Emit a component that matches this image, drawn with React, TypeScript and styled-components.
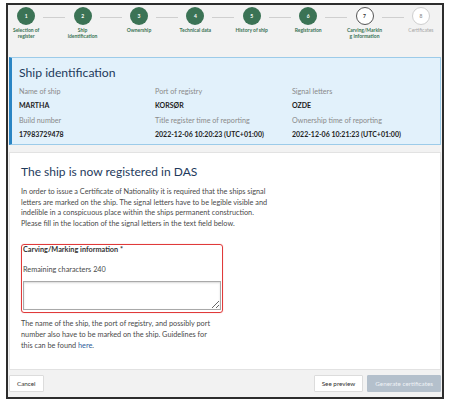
import React, { FC } from 'react'
import styled, { createGlobalStyle } from 'styled-components'

const green = '#3b7355'
const navy = '#1e3a5c'
const textGray = '#4a4a4a'

const GlobalStyle = createGlobalStyle`
  html, body {
    margin: 0;
    padding: 0;
    background: #ffffff;
  }
  body {
    font-family: Lato, "Open Sans", "Liberation Sans", sans-serif;
    color: ${textGray};
  }
`

const Frame = styled.div`
  margin: 3px 7px 0 6px;
  width: 434px;
  height: 392px;
  border: 2px solid #2d2d2d;
  background: #f2f2f2;
  display: flex;
  flex-direction: column;
  overflow: hidden;
`

const Stepper = styled.div`
  display: flex;
  height: 50px;
  margin-left: -10px;
  padding-top: 2px;
`

const Step = styled.div`
  flex: 0 0 56.4px;
  display: flex;
  flex-direction: column;
  align-items: center;
  position: relative;
`

const Connector = styled.div`
  position: absolute;
  top: 10px;
  left: calc(50% + 17px);
  width: 22px;
  height: 1px;
  background: #cfcfcf;
`

type CircleState = 'done' | 'current' | 'todo'

const Circle = styled.div<{ $state: CircleState }>`
  width: 18px;
  height: 18px;
  border-radius: 50%;
  box-sizing: border-box;
  display: flex;
  align-items: center;
  justify-content: center;
  font-size: 5px;
  font-weight: 700;
  background: ${(p) => (p.$state === 'done' ? green : '#ffffff')};
  color: ${(p) => (p.$state === 'done' ? '#ffffff' : p.$state === 'current' ? '#333' : '#999')};
  border: ${(p) =>
    p.$state === 'done' ? 'none' : p.$state === 'current' ? '1px solid #555' : '1px solid #cfcfcf'};
`

const StepLabel = styled.div<{ $todo?: boolean }>`
  margin-top: 3px;
  font-size: 5px;
  line-height: 5.5px;
  text-align: center;
  width: 36px;
  color: ${(p) => (p.$todo ? '#a5a5a5' : green)};
  font-weight: ${(p) => (p.$todo ? 400 : 700)};
`

const InfoPanel = styled.section`
  margin: 0 1px;
  height: 88px;
  box-sizing: border-box;
  background: #e2f1fb;
  border: 1px solid #9ccbe9;
  border-left: 3px solid #2a85c4;
  padding: 8px 8px 0 7px;
`

const PanelTitle = styled.h2`
  margin: 0 0 8px;
  font-size: 12.2px;
  line-height: 14px;
  font-weight: 400;
  color: ${navy};
`

const InfoGrid = styled.div`
  display: grid;
  grid-template-columns: 136px 137px 1fr;
  row-gap: 8px;
`

const Field = styled.div`
  display: flex;
  flex-direction: column;
  gap: 5px;
`

const FieldLabel = styled.span`
  font-size: 7.2px;
  line-height: 8px;
  color: #8a8a8a;
`

const FieldValue = styled.span`
  font-size: 7px;
  line-height: 8px;
  font-weight: 700;
  color: #222;
`

const MainPanel = styled.section`
  margin: 7px 1px 0;
  height: 218px;
  box-sizing: border-box;
  background: #ffffff;
  border: 1px solid #e2e2e2;
  padding: 12px 12px 0 11px;
`

const MainTitle = styled.h1`
  margin: 0 0 8px;
  font-size: 12px;
  line-height: 14px;
  font-weight: 400;
  color: ${navy};
`

const Paragraph = styled.p`
  margin: 0;
  width: 252px;
  font-size: 7.3px;
  line-height: 10.6px;
  color: ${textGray};
`

const Highlight = styled.div`
  margin-top: 15px;
  width: 202px;
  box-sizing: border-box;
  border: 1px solid #e03a3a;
  border-radius: 3px;
  box-shadow: 0 0 1px rgba(224, 58, 58, 0.5);
  padding: 1px 1px 2px 1px;
`

const InputLabel = styled.div`
  font-size: 7.3px;
  line-height: 8px;
  font-weight: 700;
  color: #333;
`

const Remaining = styled.div`
  margin-top: 12px;
  font-size: 7.3px;
  line-height: 8px;
  color: ${textGray};
`

const TextArea = styled.textarea`
  display: block;
  margin-top: 7px;
  width: 100%;
  height: 29px;
  box-sizing: border-box;
  border: 1px solid #a9a9a9;
  box-shadow: inset 0 1px 2px rgba(0, 0, 0, 0.15);
  resize: vertical;
  font-family: inherit;
  font-size: 7px;
`

const Hint = styled.p`
  margin: 6px 0 0;
  width: 196px;
  font-size: 7.3px;
  line-height: 10.8px;
  color: ${textGray};
`

const Link = styled.a`
  color: #2a5d9a;
  text-decoration: none;
`

const Footer = styled.footer`
  flex: 1;
  display: flex;
  align-items: center;
  gap: 4px;
  padding: 0 1px;
`

const Button = styled.button<{ $primary?: boolean }>`
  height: 17px;
  padding: 0 7px;
  font-family: inherit;
  font-size: 6.3px;
  border-radius: 1px;
  border: 1px solid ${(p) => (p.$primary ? '#b4c0cc' : '#dcdcdc')};
  background: ${(p) => (p.$primary ? '#b4c0cc' : '#ffffff')};
  color: ${(p) => (p.$primary ? '#eef2f6' : '#333')};
  cursor: pointer;
`

const Spacer = styled.div`
  flex: 1;
`

const steps: { label: string; state: CircleState }[] = [
  { label: 'Selection of register', state: 'done' },
  { label: 'Ship identification', state: 'done' },
  { label: 'Ownership', state: 'done' },
  { label: 'Technical data', state: 'done' },
  { label: 'History of ship', state: 'done' },
  { label: 'Registration', state: 'done' },
  { label: 'Carving/Markin g information', state: 'current' },
  { label: 'Certificates', state: 'todo' },
]

const info = [
  ['Name of ship', 'MARTHA'],
  ['Port of registry', 'KORSØR'],
  ['Signal letters', 'OZDE'],
  ['Build number', '17983729478'],
  ['Title register time of reporting', '2022-12-06 10:20:23 (UTC+01:00)'],
  ['Ownership time of reporting', '2022-12-06 10:21:23 (UTC+01:00)'],
]

const App: FC = () => {
  return (
    <>
      <GlobalStyle />
      <Frame>
        <Stepper>
          {steps.map((s, i) => (
            <Step key={s.label}>
              <Circle $state={s.state}>{i + 1}</Circle>
              <StepLabel $todo={s.state === 'todo'}>{s.label}</StepLabel>
              {i < steps.length - 1 && <Connector />}
            </Step>
          ))}
        </Stepper>

        <InfoPanel>
          <PanelTitle>Ship identification</PanelTitle>
          <InfoGrid>
            {info.map(([label, value]) => (
              <Field key={label}>
                <FieldLabel>{label}</FieldLabel>
                <FieldValue>{value}</FieldValue>
              </Field>
            ))}
          </InfoGrid>
        </InfoPanel>

        <MainPanel>
          <MainTitle>The ship is now registered in DAS</MainTitle>
          <Paragraph>
            In order to issue a Certificate of Nationality it is required that the ships signal
            letters are marked on the ship. The signal letters have to be legible visible and
            indelible in a conspicuous place within the ships permanent construction. Please fill
            in the location of the signal letters in the text field below.
          </Paragraph>
          <Highlight>
            <InputLabel>Carving/Marking information *</InputLabel>
            <Remaining>Remaining characters 240</Remaining>
            <TextArea />
          </Highlight>
          <Hint>
            The name of the ship, the port of registry, and possibly port number also have to be
            marked on the ship. Guidelines for this can be found <Link href="#">here</Link>.
          </Hint>
        </MainPanel>

        <Footer>
          <Button>Cancel</Button>
          <Spacer />
          <Button>See preview</Button>
          <Button $primary>Generate certificates</Button>
        </Footer>
      </Frame>
    </>
  )
}

export default App
